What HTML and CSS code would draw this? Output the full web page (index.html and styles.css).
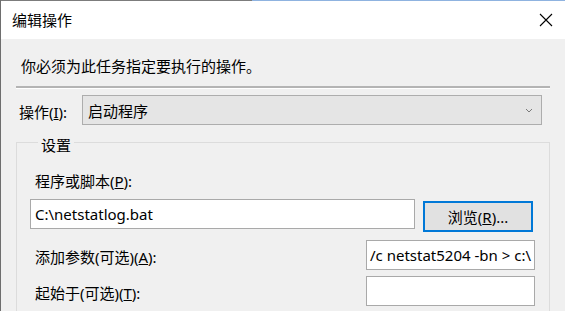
FILE: index.html
```html
<!DOCTYPE html>
<html lang="zh-CN">
<head>
    <meta charset="UTF-8">
    <meta name="viewport" content="width=device-width, initial-scale=1.0">
    <title>编辑操作</title>
    <link rel="stylesheet" href="styles.css">
</head>
<body>
    <div class="window">
        <div class="topline">
            <div class="topline-gray"></div>
            <div class="topline-blue"></div>
        </div>
        <div class="titlebar">
            <span class="title">编辑操作</span>
            <svg class="close" width="14" height="14" viewBox="0 0 14 14">
                <path d="M1 1 L13 13 M13 1 L1 13" stroke="#000" stroke-width="1.1" fill="none"/>
            </svg>
        </div>
        <div class="content">
            <p class="intro">你必须为此任务指定要执行的操作。</p>
            <div class="separator"></div>
            <div class="action-row">
                <span class="label">操作(<u>I</u>):</span>
                <div class="combo">
                    <span>启动程序</span>
                    <svg class="chevron" width="8" height="5" viewBox="0 0 8 5">
                        <path d="M1 1 L4 4 L7 1" stroke="#7a7a7a" stroke-width="1" fill="none"/>
                    </svg>
                </div>
            </div>
            <fieldset class="group">
                <legend>设置</legend>
                <div class="field-label">程序或脚本(<u>P</u>):</div>
                <div class="program-row">
                    <div class="textbox program">C:\netstatlog.bat</div>
                    <button class="browse">浏览(<u>R</u>)...</button>
                </div>
                <div class="option-row args">
                    <span class="field-label">添加参数(可选)(<u>A</u>):</span>
                    <div class="textbox small">/c netstat5204 -bn &gt; c:\</div>
                </div>
                <div class="option-row start">
                    <span class="field-label">起始于(可选)(<u>T</u>):</span>
                    <div class="textbox small"></div>
                </div>
            </fieldset>
        </div>
    </div>
</body>
</html>
```

FILE: styles.css
```css
html, body {
    margin: 0;
    padding: 0;
    width: 565px;
    height: 311px;
    overflow: hidden;
}
body {
    font-family: "Noto Sans", "Noto Sans CJK SC", sans-serif;
    font-size: 15px;
    color: #000;
    background: #f0f0f0;
}
.window {
    height: 311px;
    overflow: hidden;
    border-left: 1px solid #6e6e6e;
    background: #f0f0f0;
}
.topline {
    display: flex;
    height: 1px;
}
.topline-gray {
    width: 251px;
    background: #7c7c7c;
}
.topline-blue {
    flex: 1;
    background: #8fb3e0;
}
.titlebar {
    height: 38px;
    background: #fff;
    display: flex;
    align-items: center;
    justify-content: space-between;
    padding: 0 12px 0 11px;
}
.title {
    font-family: "Noto Sans CJK SC", sans-serif;
    line-height: 20px;
}
.close {
    display: block;
}
.content {
    padding: 0 15px;
}
.intro {
    margin: 0;
    padding-top: 17px;
    padding-left: 5px;
    line-height: 20px;
    font-family: "Noto Sans CJK SC", sans-serif;
}
.separator {
    margin-top: 10px;
    height: 2px;
    background: #b4b4b4;
    border-bottom: 1px solid #fff;
}
.action-row {
    display: flex;
    align-items: center;
    margin-top: 6px;
}
.label {
    width: 66px;
    padding-left: 3px;
    padding-top: 3px;
    box-sizing: border-box;
    line-height: 20px;
}
.combo {
    width: 460px;
    height: 30px;
    box-sizing: border-box;
    background: #e5e5e5;
    border: 1px solid #adadad;
    display: flex;
    align-items: center;
    justify-content: space-between;
    padding: 0 8px 0 5px;
    font-family: "Noto Sans CJK SC", sans-serif;
}
.chevron {
    display: block;
}
.group {
    margin: 4px 0 0;
    padding: 0 13px 5px;
    border: 1px solid #dcdcdc;
    border-bottom: none;
    min-inline-size: 0;
}
.group legend {
    margin-left: 8px;
    padding: 6px 3px 0;
    line-height: 20px;
    font-family: "Noto Sans CJK SC", sans-serif;
}
.field-label {
    line-height: 20px;
    padding-left: 5px;
}
.group > .field-label {
    margin-top: 16px;
}
.program-row {
    display: flex;
    align-items: flex-start;
    gap: 8px;
    margin-top: 8px;
}
.textbox {
    height: 30px;
    box-sizing: border-box;
    background: #fff;
    border: 1px solid #a9a9a9;
    padding: 0 4px;
    line-height: 28px;
    white-space: nowrap;
    overflow: hidden;
}
.program {
    width: 385px;
}
.browse {
    margin-top: 2px;
    width: 110px;
    height: 31px;
    background: #e1e1e1;
    border: 2px solid #0078d7;
    font-family: "Noto Sans", "Noto Sans CJK SC", sans-serif;
    font-size: 15px;
    color: #000;
    padding: 0;
}
.option-row {
    display: grid;
    grid-template-columns: 336px 169px;
    align-items: center;
}
.option-row .field-label {
    padding-top: 4px;
}
.args {
    margin-top: 8px;
}
.start {
    margin-top: 6px;
}
.small {
    padding-left: 3px;
}
```
